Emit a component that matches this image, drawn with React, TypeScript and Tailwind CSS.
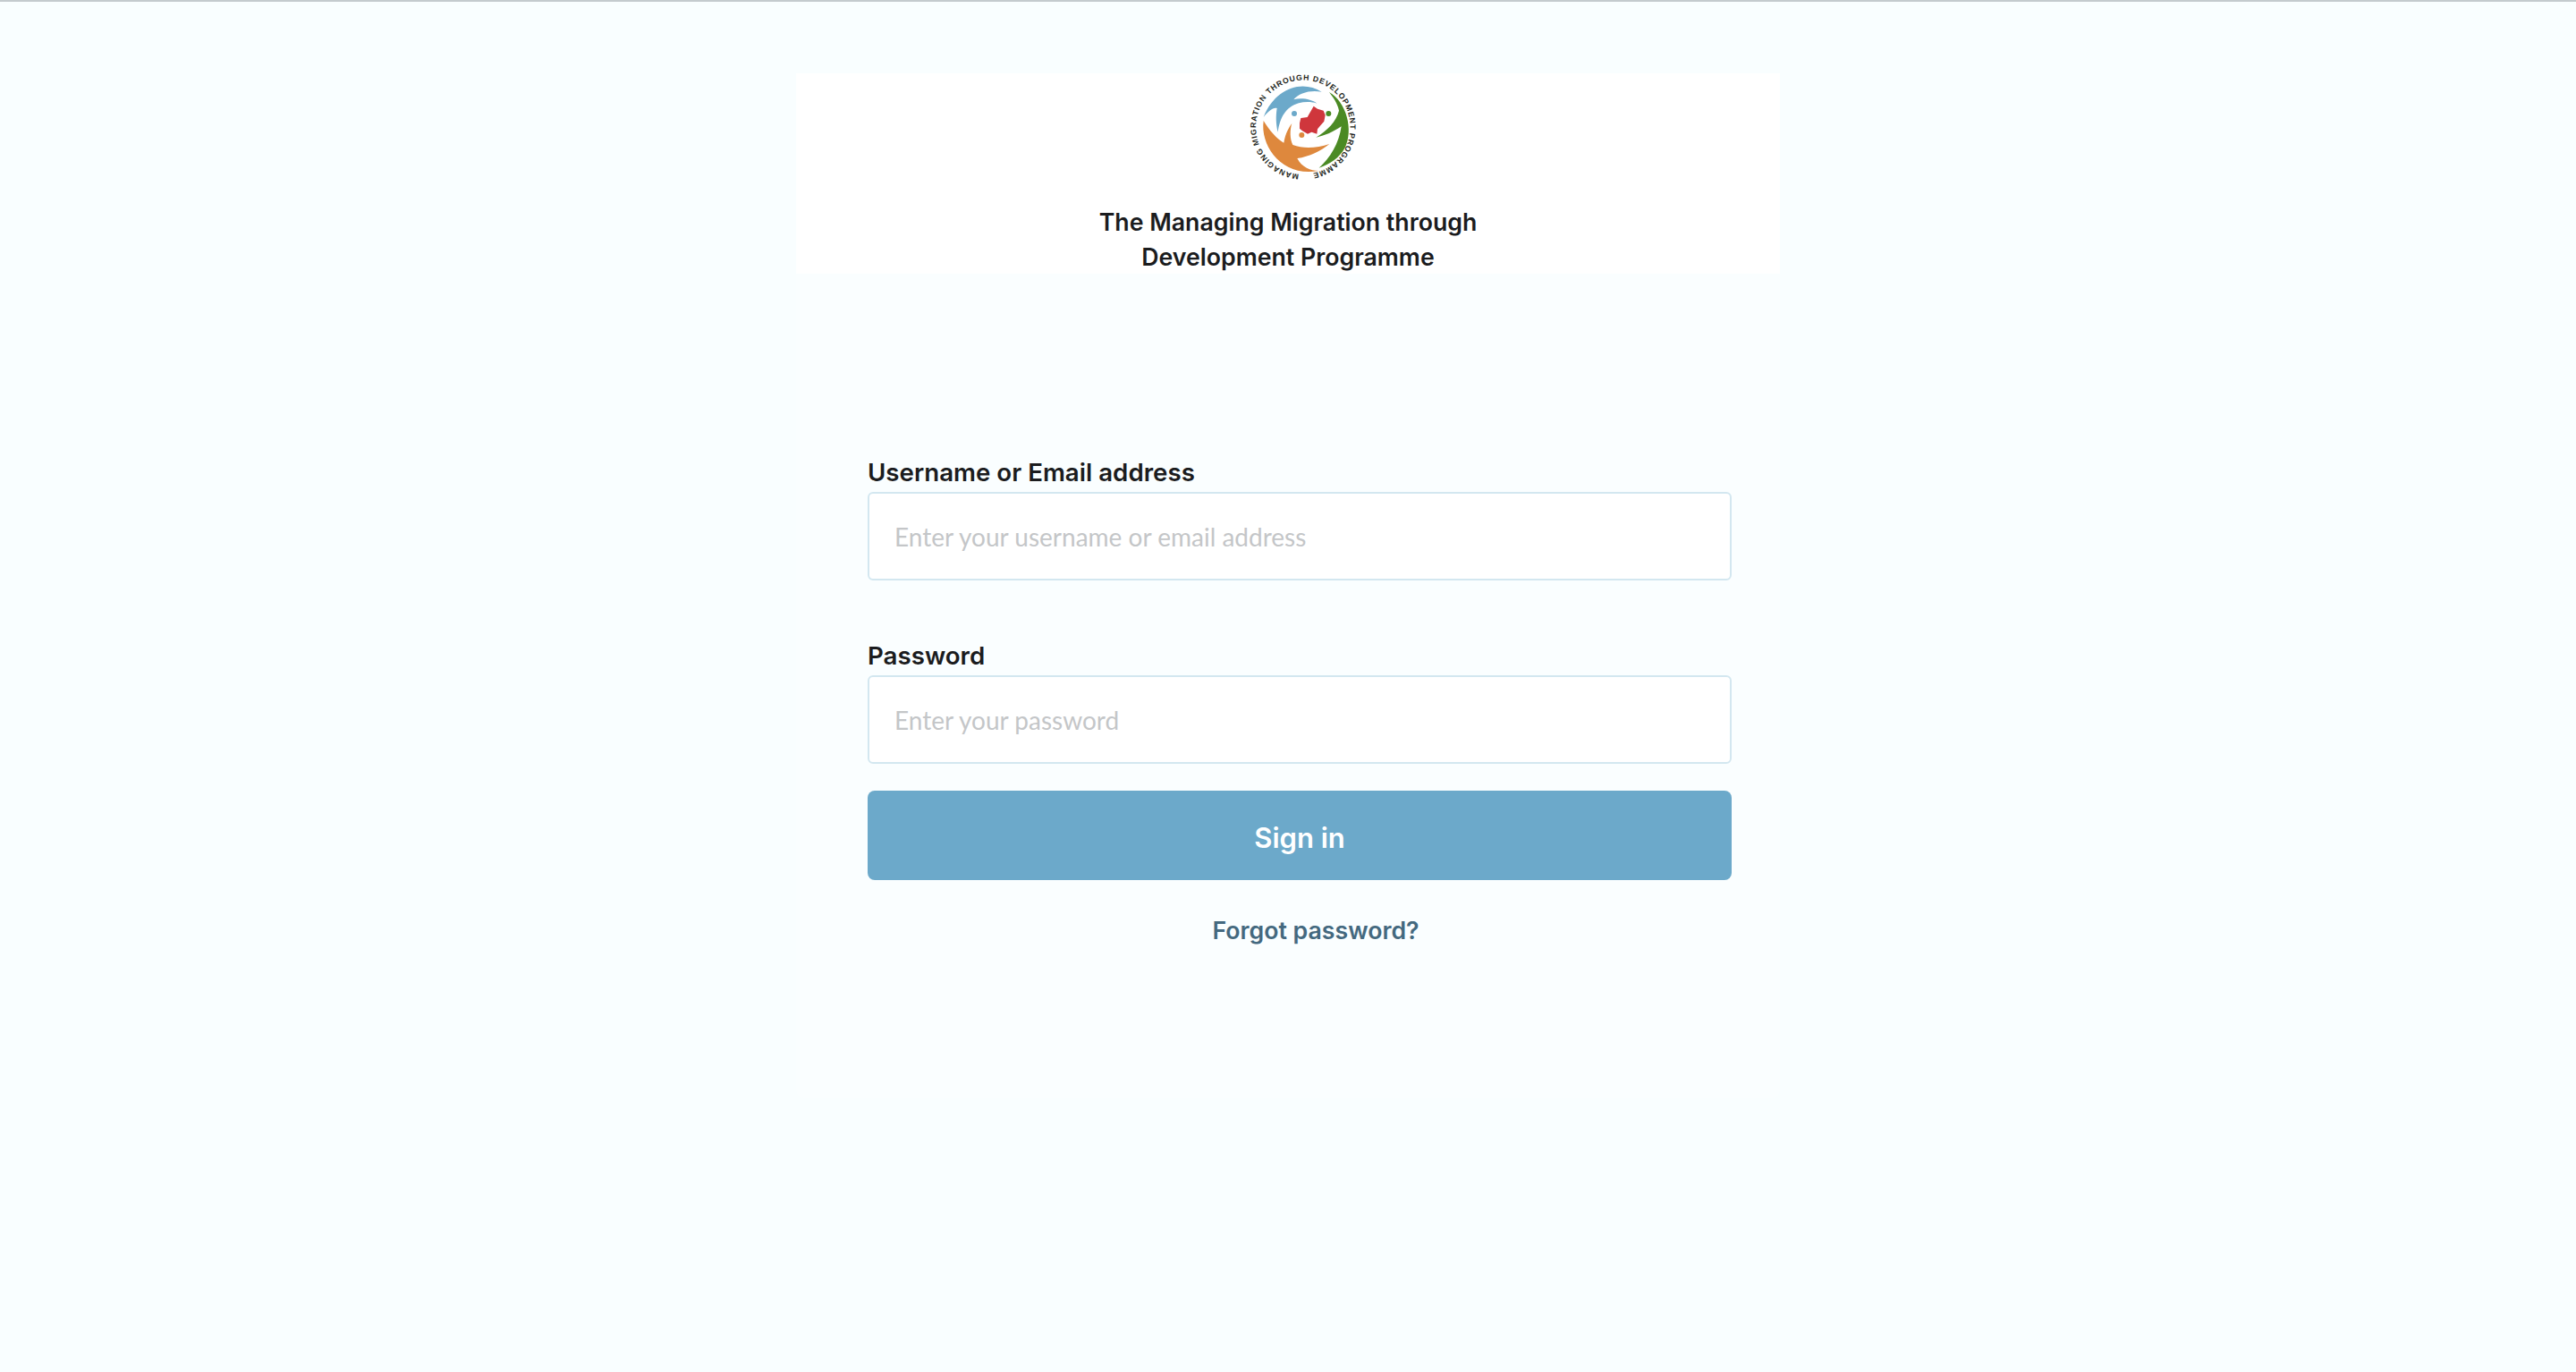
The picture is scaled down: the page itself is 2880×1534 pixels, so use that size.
import React from 'react';

function Logo() {
  return (
    <svg viewBox="170 65 366 360" width="122" height="120" className="block overflow-visible">
      <path
        d="M412 127 C345 85 255 115 217 212 C232 192 250 178 262 182 C258 205 258 235 265 262 C272 215 290 178 335 165 C355 160 378 160 396 166 C378 152 345 146 318 153 C335 130 375 120 412 127 Z"
        fill="#6ca9ca"
      />
      <path
        d="M217 224 C205 310 280 415 402 392 C375 392 345 380 330 350 C370 345 410 325 438 302 C395 316 350 318 315 305 C305 285 305 255 312 233 C295 255 288 280 285 298 C262 285 235 255 217 224 Z"
        fill="#de883d"
      />
      <path
        d="M437 128 C462 165 480 205 478 243 C450 262 420 275 393 280 C430 258 462 225 470 190 C465 165 450 145 437 128 Z M437 128 C495 160 520 255 490 315 C470 350 440 370 403 382 C440 350 470 300 478 243 C480 205 462 165 437 128 Z"
        fill="#4b8a24"
      />
      <path
        d="M385 175 L398 184 L418 190 L424 205 L420 226 L408 240 L398 252 L396 268 L378 262 L365 268 L347 258 L338 250 L338 232 L342 215 L364 212 L372 198 Z"
        fill="#cf363c"
      />
      <circle cx="320" cy="200" r="9" fill="#6ca9ca" />
      <circle cx="435" cy="200" r="9" fill="#4b8a24" />
      <circle cx="345" cy="272" r="9" fill="#de883d" />
      <defs>
        {/* ring starts at the bottom and runs clockwise */}
        <path id="ring" d="M336 403 A158 158 0 1 1 372 402" fill="none" />
      </defs>
      <text fontFamily="'Liberation Sans', sans-serif" fontWeight="700" fontSize="26" fill="#231f20">
        <textPath href="#ring" textLength="945" lengthAdjust="spacing">
          MANAGING MIGRATION THROUGH DEVELOPMENT PROGRAMME
        </textPath>
      </text>
    </svg>
  );
}

function Field({ label, placeholder, type }: { label: string; placeholder: string; type: string }) {
  return (
    <div>
      <label className="block text-[27.7px] leading-[36px] font-semibold text-[#1b1c1e]">{label}</label>
      <input
        type={type}
        placeholder={placeholder}
        className="mt-[4px] block h-[99px] w-full rounded-[6px] border-2 border-[#d3e7f0] bg-white px-[28px] pt-[1px] font-['Lato',sans-serif] text-[28px] outline-none placeholder:text-[#c4c6c8]"
      />
    </div>
  );
}

export default function App() {
  return (
    <div className="min-h-screen border-t-2 border-[#c4cbce] bg-[#f9feff] pt-[80px] font-['Inter',sans-serif]">
      <div className="mx-auto h-[1146px] w-[1100px] rounded-[10px] bg-[#fafeff]">
        <div className="flex h-[224px] flex-col items-center bg-white">
          <div className="ml-[36px]">
            <Logo />
          </div>
          <h1 className="mt-[27px] text-center text-[26.7px] leading-[39px] font-semibold text-[#1b1c1e]">
            The Managing Migration through
            <br />
            Development Programme
          </h1>
        </div>
        <form className="ml-[80px] w-[966px] pt-[204px]">
          <Field label="Username or Email address" placeholder="Enter your username or email address" type="text" />
          <div className="mt-[66px]">
            <Field label="Password" placeholder="Enter your password" type="password" />
          </div>
          <button
            type="button"
            className="mt-[30px] block h-[100px] w-full rounded-[8px] bg-[#6ca9ca] pt-[6px] text-[31px] font-semibold text-white"
          >
            Sign in
          </button>
          <div className="mt-[37px] pl-[36px] text-center">
            <a className="text-[26.7px] leading-[38px] font-semibold text-[#44697f]">Forgot password?</a>
          </div>
        </form>
      </div>
    </div>
  );
}
